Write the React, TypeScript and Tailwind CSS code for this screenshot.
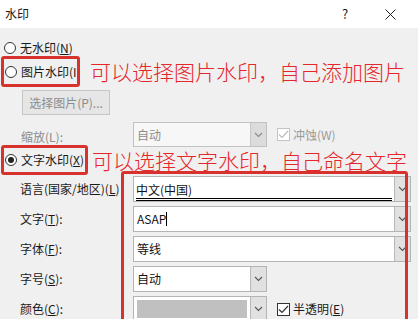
import React from 'react';

const font = { fontFamily: '"Noto Sans CJK SC", "Noto Sans", sans-serif' };

function Chevron({ dim }: { dim?: boolean }) {
  return (
    <svg width="9" height="6" viewBox="0 0 9 6">
      <path d="M1 1l3.5 3.5L8 1" fill="none" stroke={dim ? '#8a8a8a' : '#555'} strokeWidth="1.1" />
    </svg>
  );
}

function Radio({ checked }: { checked?: boolean }) {
  return (
    <span className="w-[12px] h-[12px] rounded-full border border-[#333] bg-white flex items-center justify-center shrink-0">
      {checked && <span className="w-[6px] h-[6px] rounded-full bg-[#222]" />}
    </span>
  );
}

function Check({ checked, disabled }: { checked?: boolean; disabled?: boolean }) {
  const c = disabled ? '#bcbcbc' : '#333';
  return (
    <span className={`w-[13px] h-[13px] border bg-white flex items-center justify-center shrink-0 ${disabled ? 'border-[#c4c4c4]' : 'border-[#333]'}`}>
      {checked && (
        <svg width="11" height="9" viewBox="0 0 11 9">
          <path d="M1 4.5l3 3L10 1" fill="none" stroke={c} strokeWidth="1.2" />
        </svg>
      )}
    </span>
  );
}

function Arrow({ dim }: { dim?: boolean }) {
  return (
    <span className={`w-[16px] h-full flex items-center justify-center border-l ${dim ? 'bg-[#dcdcdc] border-[#c8c8c8]' : 'bg-[#e1e1e1] border-[#b8b8b8]'}`}>
      <Chevron dim={dim} />
    </span>
  );
}

function Label({ children, dim }: { children: React.ReactNode; dim?: boolean }) {
  return <span className={`text-[12px] leading-none ${dim ? 'text-[#8c8c8c]' : 'text-[#1a1a1a]'}`}>{children}</span>;
}

export default function App() {
  return (
    <div className="w-[418px] h-[319px] overflow-hidden bg-[#f0f0f0] relative" style={font}>
      <div className="h-[28px] bg-white flex items-center px-[5px] text-[12px] text-[#1a1a1a]">
        <span className="flex-1">水印</span>
        <span className="w-[10px] mr-[33px] text-[13px]">?</span>
        <svg width="11" height="11" viewBox="0 0 11 11" className="mr-[17px]">
          <path d="M0.5 0.5l10 10M10.5 0.5l-10 10" stroke="#222" strokeWidth="1" />
        </svg>
      </div>

      <div className="pt-[12px]">
        <div className="h-[15px] flex items-center gap-[4px] pl-[4px]">
          <Radio />
          <Label>无水印(<u>N</u>)</Label>
        </div>

        <div className="mt-[1px] flex items-center">
          <div className="ml-[1px] w-[79px] h-[31px] border-[3px] border-[#d8322e] rounded-[3px] flex items-center gap-[4px] pl-[1px] overflow-hidden whitespace-nowrap">
            <Radio />
            <Label>图片水印(I</Label>
          </div>
          <span className="ml-[10px] text-[21px] leading-none font-light text-[#e5262b]">可以选择图片水印，自己添加图片</span>
        </div>

        <div className="mt-[3px] ml-[22px] w-[88px] h-[25px] border border-[#c6c6c6] bg-[#e6e6e6] flex items-center justify-center text-[12px] text-[#8c8c8c]">
          选择图片(P)...
        </div>

        <div className="mt-[7px] h-[25px] flex items-center">
          <span className="w-[133px] pl-[21px]"><Label dim>缩放(L):</Label></span>
          <div className="w-[134px] h-full border border-[#c2c2c2] bg-[#f7f7f7] flex items-stretch">
            <span className="flex-1 flex items-center pl-[3px] text-[12px] text-[#8c8c8c]">自动</span>
            <Arrow dim />
          </div>
          <span className="ml-[10px] flex items-center gap-[3px]">
            <Check checked disabled />
            <span className="text-[12px] text-[#9a9a9a]">冲蚀(W)</span>
          </span>
        </div>

        <div className="mt-[-2px] flex items-center">
          <div className="ml-[1px] w-[87px] h-[30px] border-[3px] border-[#d8322e] rounded-[3px] flex items-center gap-[4px] pl-[1px] overflow-hidden whitespace-nowrap">
            <Radio checked />
            <Label>文字水印(<u>X</u>)</Label>
          </div>
          <span className="ml-[4px] text-[21px] leading-none font-light text-[#e5262b]">可以选择文字水印，自己命名文字</span>
        </div>

        <div className="grid grid-cols-[133px_1fr] auto-rows-[26px] gap-y-[4px] mt-[1px]">
          <span className="pl-[20px] flex items-center"><Label>语言(国家/地区)(<u>L</u>)</Label></span>
          <div className="w-[278px] border border-[#b4b4b4] bg-white flex items-stretch">
            <span className="flex-1 flex items-center pl-[2px] pr-[2px] text-[12px] text-[#111]">
              <span className="w-full pt-[6px] pb-[2px] border-b-[3px] border-double border-black leading-none">中文(中国)</span>
            </span>
            <Arrow />
          </div>

          <span className="pl-[20px] flex items-center"><Label>文字(<u>T</u>):</Label></span>
          <div className="w-[278px] border border-[#b4b4b4] bg-white flex items-stretch">
            <span className="flex-1 flex items-center pl-[3px] text-[12px] text-[#111]">
              ASAP<span className="w-px h-[14px] bg-black" />
            </span>
            <Arrow />
          </div>

          <span className="pl-[20px] flex items-center"><Label>字体(<u>F</u>):</Label></span>
          <div className="w-[278px] border border-[#b4b4b4] bg-white flex items-stretch">
            <span className="flex-1 flex items-center pl-[3px] text-[12px] text-[#111]">等线</span>
            <Arrow />
          </div>

          <span className="pl-[20px] flex items-center"><Label>字号(<u>S</u>):</Label></span>
          <div className="flex items-stretch">
            <div className="w-[134px] border border-[#b4b4b4] bg-white flex items-stretch">
              <span className="flex-1 flex items-center pl-[3px] text-[12px] text-[#111]">自动</span>
              <Arrow />
            </div>
          </div>

          <span className="pl-[20px] flex items-center"><Label>颜色(<u>C</u>):</Label></span>
          <div className="flex items-center">
            <div className="w-[134px] h-full border border-[#b4b4b4] bg-white flex items-stretch">
              <span className="flex-1 p-[3px]"><span className="block w-full h-full bg-[#c0c0c0]" /></span>
              <Arrow />
            </div>
            <span className="ml-[10px] flex items-center gap-[3px]">
              <Check checked />
              <span className="text-[12px] text-[#1a1a1a]">半透明(<u>E</u>)</span>
            </span>
          </div>
        </div>
      </div>

      <div className="absolute left-[121px] top-[171px] w-[287px] h-[200px] border-[3px] border-[#d8322e] rounded-[3px] pointer-events-none" />
    </div>
  );
}
